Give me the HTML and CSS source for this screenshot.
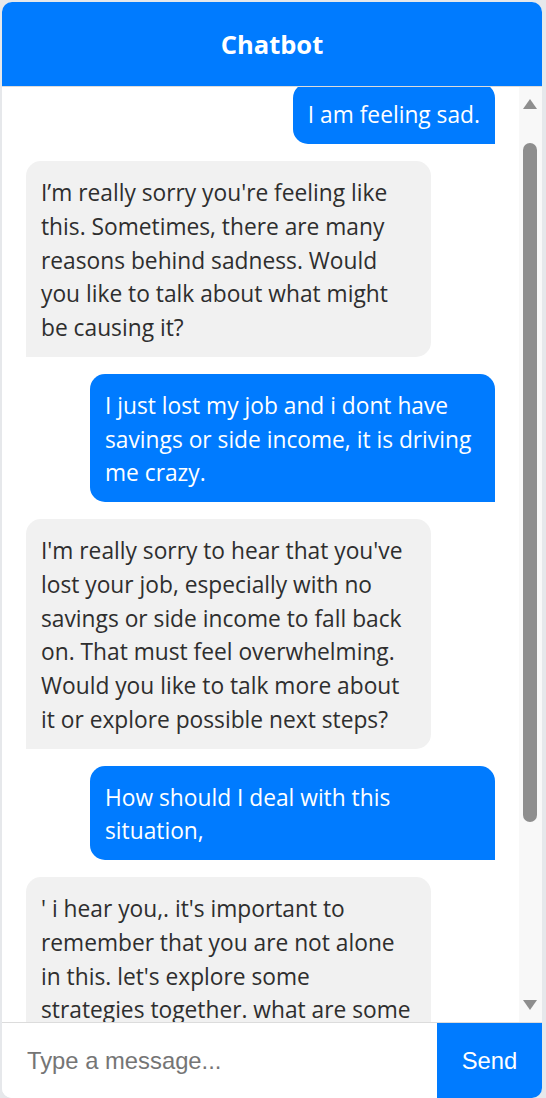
FILE: index.html
```html
<!DOCTYPE html>
<html lang="en">
<head>
<meta charset="utf-8">
<title>Chatbot</title>
<link rel="stylesheet" href="styles.css">
</head>
<body>
<div class="chat">
  <header class="chat-header">Chatbot</header>
  <div class="chat-body">
    <div class="messages">
      <div class="message-list">
        <div class="msg user">I am feeling sad.</div>
        <div class="msg bot wide">I’m really sorry you're feeling like<br>this. Sometimes, there are many<br>reasons behind sadness. Would<br>you like to talk about what might<br>be causing it?</div>
        <div class="msg user wide">I just lost my job and i dont have<br>savings or side income, it is driving<br>me crazy.</div>
        <div class="msg bot wide">I'm really sorry to hear that you've<br>lost your job, especially with no<br>savings or side income to fall back<br>on. That must feel overwhelming.<br>Would you like to talk more about<br>it or explore possible next steps?</div>
        <div class="msg user wide">How should I deal with this<br>situation,</div>
        <div class="msg bot wide">' i hear you,. it's important to<br>remember that you are not alone<br>in this. let's explore some<br>strategies together. what are some</div>
      </div>
    </div>
    <div class="scrollbar" aria-hidden="true">
      <span class="arrow up"></span>
      <span class="thumb"></span>
      <span class="arrow down"></span>
    </div>
  </div>
  <form class="composer">
    <input class="composer-input" type="text" placeholder="Type a message...">
    <button class="composer-send" type="button">Send</button>
  </form>
</div>
</body>
</html>
```

FILE: styles.css
```css
* {
  box-sizing: border-box;
}

html, body {
  margin: 0;
  padding: 0;
}

body {
  background: #e6e8eb;
  padding: 2px 4px 0 2px;
  height: 1098px;
  overflow: hidden;
}

.chat {
  width: 540px;
  height: 1096px;
  background: #ffffff;
  border-radius: 10px;
  overflow: hidden;
  display: flex;
  flex-direction: column;
}

.chat-header {
  height: 85px;
  flex: none;
  background: #007bff;
  border-bottom: 1px solid #dcdcdc;
  color: #ffffff;
  font-family: "Open Sans", "Noto Sans", sans-serif;
  font-weight: 700;
  font-size: 25.5px;
  display: flex;
  align-items: center;
  justify-content: center;
  padding-bottom: 1px;
}

.chat-body {
  flex: 1;
  min-height: 0;
  display: flex;
}

.messages {
  flex: 1;
  min-width: 0;
  overflow: hidden;
  padding: 0 24px;
}

.message-list {
  display: flex;
  flex-direction: column;
  gap: 17px;
  margin-top: -3.75px;
}

.msg {
  font-family: "Open Sans", "Noto Sans", sans-serif;
  font-size: 22.75px;
  line-height: 33.75px;
  padding: 15px 15px 12px;
  max-width: 405px;
  white-space: nowrap;
}

.msg.wide {
  width: 405px;
}

.msg.user {
  align-self: flex-end;
  background: #007bff;
  color: #ffffff;
  border-radius: 15px 15px 0 15px;
}

.msg.bot {
  align-self: flex-start;
  background: #f1f1f1;
  color: #2e2e2e;
  border-radius: 15px 15px 15px 0;
}

.scrollbar {
  width: 23px;
  flex: none;
  background: #f8f8f8;
  display: flex;
  flex-direction: column;
  align-items: center;
  padding: 12px 1px 12px 0;
}

.arrow {
  width: 0;
  height: 0;
  border-left: 7px solid transparent;
  border-right: 7px solid transparent;
}

.arrow.up {
  border-bottom: 10px solid #8e8e8e;
}

.arrow.down {
  border-top: 10px solid #8e8e8e;
  margin-top: auto;
}

.thumb {
  width: 14px;
  height: 679px;
  margin-top: 34px;
  border-radius: 7px;
  background: #8e8e8e;
}

.composer {
  flex: none;
  height: 76px;
  margin: 0;
  border-top: 1px solid #dcdcdc;
  display: flex;
}

.composer-input {
  flex: 1;
  min-width: 0;
  border: none;
  outline: none;
  padding: 0 25px;
  font-family: "Liberation Sans", Arial, sans-serif;
  font-size: 23.8px;
  color: #333333;
  background: #ffffff;
}

.composer-input::placeholder {
  color: #757575;
}

.composer-send {
  width: 105px;
  border: none;
  background: #007bff;
  color: #ffffff;
  font-family: "Liberation Sans", Arial, sans-serif;
  font-size: 23.8px;
  padding: 0;
  cursor: pointer;
}
```
